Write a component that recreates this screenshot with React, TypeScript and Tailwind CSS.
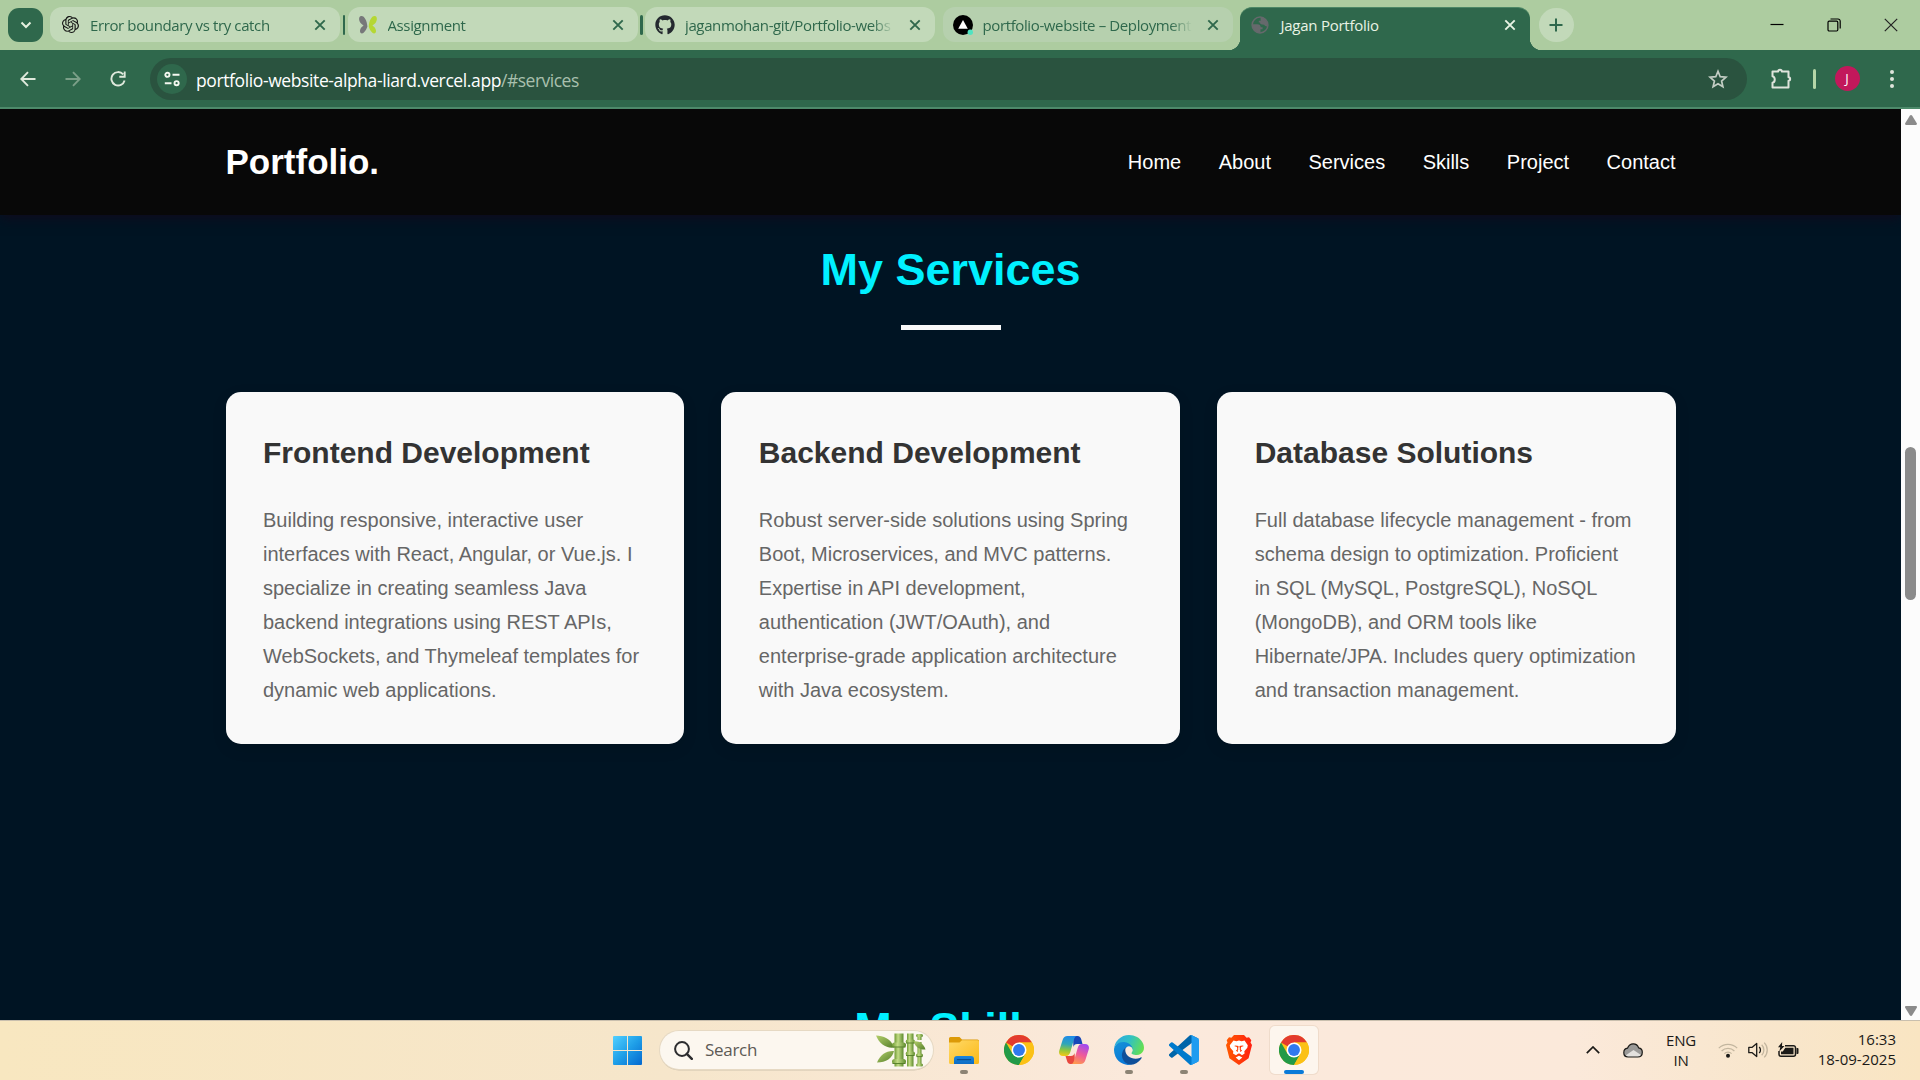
import React from "react";
import type { ReactNode } from "react";
import { SiOpenai } from "react-icons/si";
import { FaGithub } from "react-icons/fa";

/* ---------- favicons ---------- */

function ButterflyIcon() {
  return (
    <svg viewBox="0 0 20 20" className="h-5 w-5">
      <path d="M9.400 11.500C9 6 6.500.8 3.200 1.100.6 1.400.6 5.200 2.200 7.600c1 1.600 2.600 2.200 3.400 3-1.600 1-3.400 2.800-3.600 5.200-.2 2.600 2 3.600 3.600 2 2-2 3.200-4.200 3.800-6.300z" fill="#77787a" />
      <path d="M10.800 11.500C11 6 13.600.8 16.800 1.100c2.600.3 2.600 4.100 1 6.500-1 1.600-2.600 2.200-3.400 3 1.600 1 3.400 2.800 3.600 5.200.2 2.600-2 3.600-3.600 2-2-2-3.200-4.200-3.600-6.300z" fill="#b5d733" />
    </svg>
  );
}

function VercelIcon() {
  return (
    <svg viewBox="0 0 20 20" className="h-5 w-5">
      <circle cx="10" cy="10" r="10" fill="#000" />
      <path d="M10 5l4.800 8.800H5.200z" fill="#fff" />
      <circle cx="17.300" cy="17.300" r="2.700" fill="#50e3c2" />
    </svg>
  );
}

function GlobeIcon() {
  return (
    <svg viewBox="0 0 18 18" className="h-[18px] w-[18px]">
      <circle cx="9" cy="9" r="7.900" fill="none" stroke="#66696c" strokeWidth="1.500" />
      <path d="M9.500 1.300l3.500.9 2.300 2.200 1.200 3.400-.3 2.600c-1.500 0-2.500-.2-3-1.600l-2-.2c-1.400 0-2.200-.8-2.200-2H7.800V4.800h1.900z" fill="#66696c" />
      <path d="M1.300 8.200L6.500 8.300c2 .1 3.200 1.200 3.200 2.900h1.900v2.100H9.500v3.500c-3.600 0-6.900-2-8-5.500z" fill="#66696c" />
    </svg>
  );
}

function Cross({ className }: { className: string }) {
  return (
    <svg viewBox="0 0 12 12" className={"h-3 w-3 shrink-0 " + className} fill="none" stroke="currentColor" strokeWidth="1.900">
      <path d="M1.300 1.300l9.400 9.400M10.700 1.300L1.300 10.700" />
    </svg>
  );
}

/* ---------- browser ---------- */

function Tab({ icon, title, className }: { icon: ReactNode; title: string; className: string }) {
  return (
    <div className={"flex h-[35px] w-[290px] shrink-0 items-center rounded-xl pl-[10px] pr-[14px] " + className}>
      <span className="flex w-5 shrink-0 justify-center">{icon}</span>
      <span className="ml-[10px] w-[209px] overflow-hidden whitespace-nowrap text-[15px] leading-5 tracking-[-0.380px] text-[#2f684c] [mask-image:linear-gradient(to_right,black_187px,transparent_209px)]">
        {title}
      </span>
      <Cross className="ml-auto text-[#2f684c]" />
    </div>
  );
}

function TabDivider() {
  return <div className="mx-[2.500px] h-5 w-[2.500px] shrink-0 rounded-full bg-[#2f684c]" />;
}

function TabStrip() {
  return (
    <div className="flex h-[50px] bg-[#adcca0] pl-2">
      <div className="flex h-[49px] items-center">
        <button className="mr-[7px] mt-[1px] flex h-[34px] w-[35px] items-center justify-center rounded-[11px] bg-[#2f684c]">
          <svg viewBox="0 0 12 8" className="h-2 w-3" fill="none" stroke="#e5f0df" strokeWidth="2">
            <path d="M1.500 1.500L6 6l4.500-4.500" />
          </svg>
        </button>
        <Tab icon={<SiOpenai className="h-[17px] w-[17px] text-[#141414]" />} title="Error boundary vs try catch" className="bg-[#c2d9b9]" />
        <TabDivider />
        <Tab icon={<ButterflyIcon />} title="Assignment" className="bg-[#c2d9b9]" />
        <TabDivider />
        <Tab icon={<FaGithub className="h-5 w-5 text-[#24292f]" />} title="jaganmohan-git/Portfolio-webs" className="bg-[#c2d9b9]" />
        <div className="w-[7.500px] shrink-0" />
        <Tab icon={<VercelIcon />} title="portfolio-website – Deployment" className="bg-[#b6d0ae]" />
      </div>
      <div className="relative ml-[7px] mt-[7px] flex h-[43px] w-[290px] shrink-0 rounded-t-xl border-t border-[#4c8766] bg-[#2f684c] pl-[11px] pr-[14px]">
        <span className="absolute -left-3 bottom-0 h-3 w-3 bg-[radial-gradient(circle_at_0_0,transparent_12px,#2f684c_12.500px)]" />
        <span className="absolute -right-3 bottom-0 h-3 w-3 bg-[radial-gradient(circle_at_100%_0,transparent_12px,#2f684c_12.500px)]" />
        <div className="flex h-[34px] w-full items-center">
          <GlobeIcon />
          <span className="ml-3 text-[15px] leading-5 tracking-[-0.250px] text-[#e9f3e4]">Jagan Portfolio</span>
          <Cross className="ml-auto text-[#e9f3e4]" />
        </div>
      </div>
      <button className="ml-[9px] mt-2 flex h-[34px] w-[35px] items-center justify-center rounded-full bg-[#c2d9b9]">
        <svg viewBox="0 0 14 14" className="h-[14px] w-[14px]" stroke="#2f684c" strokeWidth="2">
          <path d="M7 .5v13M.5 7h13" />
        </svg>
      </button>
      <div className="ml-auto flex h-[49px] items-center gap-[43px] pr-[22px]">
        <svg viewBox="0 0 14 14" className="h-[14px] w-[14px]" stroke="#000" strokeWidth="1.200">
          <path d="M.5 6.500h13" />
        </svg>
        <svg viewBox="0 0 14 14" className="h-[14px] w-[14px]" fill="none" stroke="#000" strokeWidth="1.200">
          <rect x="1" y="3.200" width="9.800" height="9.800" rx="1.200" />
          <path d="M3.500 1H11a2.200 2.200 0 0 1 2.200 2.200v7.300" />
        </svg>
        <svg viewBox="0 0 14 14" className="h-[14px] w-[14px]" fill="none" stroke="#222" strokeWidth="1.200">
          <path d="M.8.8l12.400 12.400M13.200.8L.8 13.200" />
        </svg>
      </div>
    </div>
  );
}

function Toolbar() {
  return (
    <div className="flex h-[59px] items-center border-b-2 border-[#4d8a6a] bg-[#2f684c] pl-5 pr-[26px] text-[#dfe9dc]">
      <svg viewBox="0 0 16 16" className="h-4 w-4 shrink-0" fill="none" stroke="currentColor" strokeWidth="1.900">
        <path d="M15.500 8H1.500M8 1.200L1.300 8 8 14.800" />
      </svg>
      <svg viewBox="0 0 16 16" className="ml-[29px] h-4 w-4 shrink-0 text-[#7b9f88]" fill="none" stroke="currentColor" strokeWidth="1.900">
        <path d="M.5 8h14M8 1.200L14.700 8 8 14.800" />
      </svg>
      <svg viewBox="0 0 16 16" className="ml-[29px] h-4 w-4 shrink-0" fill="none" stroke="currentColor" strokeWidth="1.900">
        <path d="M13.200 3.400A6.700 6.700 0 1 0 14.600 9.500M14.700 .5v5.300H9.300" />
      </svg>
      <div className="ml-6 flex h-[42px] w-[1597px] shrink-0 items-center rounded-full bg-[#2a533f] pl-[7px] pr-[19px]">
        <span className="flex h-[30px] w-[30px] items-center justify-center rounded-full bg-[#2f684c]">
          <svg viewBox="0 0 16 16" className="h-4 w-4" fill="none" stroke="#f3f8f0" strokeWidth="1.900">
            <circle cx="3.400" cy="3.800" r="2.100" />
            <path d="M8.500 3.800h7M.8 12.200h6.700" />
            <circle cx="12.600" cy="12.200" r="2.100" />
          </svg>
        </span>
        <span className="ml-[9px] pt-[2px] text-[17.500px] leading-6 text-[#a9c0ae]">
          <span className="tracking-[-0.390px] text-white">portfolio-website-alpha-liard.vercel.app</span>
          <span className="tracking-[-0.500px]">/#services</span>
        </span>
        <svg viewBox="0 0 20 20" className="ml-auto h-5 w-5" fill="none" stroke="#c3cdc4" strokeWidth="1.700">
          <path d="M10 2.300l2.200 5.400 5.800.5-4.400 3.800 1.300 5.700L10 14.700l-4.900 3 1.300-5.700L2 8.200l5.800-.5z" />
        </svg>
      </div>
      <svg viewBox="0 0 24 24" className="ml-[22px] h-6 w-6 shrink-0" fill="none" stroke="#dfe4dc" strokeWidth="2" strokeLinejoin="round">
        <path d="M3.500 4.500h5.700c0-2.200 3.600-2.200 3.600 0h6.700v5.700c2.200 0 2.200 3.600 0 3.600v6.700h-16v-4.700c3-.6 3-6 0-6.600z" />
      </svg>
      <div className="ml-5 h-5 w-[2.500px] shrink-0 rounded-full bg-[#b5d6a8]" />
      <span className="ml-[19px] flex h-[25px] w-[25px] shrink-0 items-center justify-center rounded-full bg-[#c2185b] text-[13px] leading-none text-white">J</span>
      <svg viewBox="0 0 4 20" className="ml-auto h-5 w-1 shrink-0" fill="#dfe4dc">
        <circle cx="2" cy="3" r="2" />
        <circle cx="2" cy="10" r="2" />
        <circle cx="2" cy="17" r="2" />
      </svg>
    </div>
  );
}

/* ---------- portfolio page ---------- */

const links = ["Home", "About", "Services", "Skills", "Project", "Contact"];

const services = [
  {
    title: "Frontend Development",
    lines: [
      "Building responsive, interactive user",
      "interfaces with React, Angular, or Vue.js. I",
      "specialize in creating seamless Java",
      "backend integrations using REST APIs,",
      "WebSockets, and Thymeleaf templates for",
      "dynamic web applications.",
    ],
  },
  {
    title: "Backend Development",
    lines: [
      "Robust server-side solutions using Spring",
      "Boot, Microservices, and MVC patterns.",
      "Expertise in API development,",
      "authentication (JWT/OAuth), and",
      "enterprise-grade application architecture",
      "with Java ecosystem.",
    ],
  },
  {
    title: "Database Solutions",
    lines: [
      "Full database lifecycle management - from",
      "schema design to optimization. Proficient",
      "in SQL (MySQL, PostgreSQL), NoSQL",
      "(MongoDB), and ORM tools like",
      "Hibernate/JPA. Includes query optimization",
      "and transaction management.",
    ],
  },
];

function Page() {
  return (
    <main className="flex h-full flex-1 flex-col overflow-hidden bg-[#001423] font-['Liberation_Sans',Arial,sans-serif]">
      <header className="z-10 h-[106px] shrink-0 bg-[#080808] shadow-[0_3px_12px_rgba(20,8,26,0.8)]">
        <div className="mx-auto flex h-full w-[1450px] items-center justify-between">
          <span className="-mt-[2px] text-[35px] font-bold leading-none text-white">Portfolio.</span>
          <nav className="flex gap-[37.500px] text-[20px] leading-none text-white">
            {links.map((link) => (
              <a key={link}>{link}</a>
            ))}
          </nav>
        </div>
      </header>
      <section className="mx-auto flex w-[1450px] shrink-0 flex-col items-center pt-[19px]">
        <h2 className="h-[72px] text-[45px] font-bold leading-[72px] text-[#00f0ff]">My Services</h2>
        <div className="mt-[19px] h-[5px] w-[100px] bg-[#f9f9f9]" />
        <div className="mt-[62px] grid w-full grid-cols-3 gap-[37.500px]">
          {services.map((service) => (
            <article key={service.title} className="h-[352px] rounded-[15px] bg-[#f9f9f9] px-[37.500px] pt-[36.500px] shadow-[0_5px_15px_rgba(0,0,0,0.1)]">
              <h3 className="text-[30px] font-bold leading-[48px] text-[#333]">{service.title}</h3>
              <p className="mt-[26px] whitespace-nowrap text-[20px] leading-[34px] text-[#666]">
                {service.lines.map((line) => (
                  <span key={line} className="block">{line}</span>
                ))}
              </p>
            </article>
          ))}
        </div>
      </section>
      <section className="mt-[249px] shrink-0 text-center">
        <h2 className="text-[45px] font-bold leading-[72px] text-[#00f0ff]">My Skills</h2>
      </section>
    </main>
  );
}

function Scrollbar() {
  return (
    <div className="flex w-[19px] shrink-0 flex-col items-center bg-[#fcfcfc] pb-1 pt-[6px]">
      <svg viewBox="0 0 12 10" className="h-[10px] w-3" fill="#8b8b8b">
        <path d="M6 0c.5 0 .9.300 1.200.7L11.800 8.200c.4.8 0 1.800-.9 1.800H1.100C.2 10-.2 9 .2 8.200L4.800.7C5.100.3 5.500 0 6 0z" />
      </svg>
      <div className="mt-[322px] h-[153px] w-[11px] rounded-full bg-[#8b8b8b]" />
      <svg viewBox="0 0 12 10" className="mt-auto h-[10px] w-3" fill="#8b8b8b">
        <path d="M6 10c.5 0 .9-.3 1.200-.7L11.800 1.800c.4-.8 0-1.800-.9-1.800H1.100C.2 0-.2 1 .2 1.800L4.800 9.300c.3.4.7.7 1.200.7z" />
      </svg>
    </div>
  );
}

/* ---------- taskbar ---------- */

function WindowsLogo() {
  return (
    <svg viewBox="0 0 29 29" className="h-[29px] w-[29px]">
      <defs>
        <linearGradient id="win" x1="0" y1="0" x2="29" y2="29" gradientUnits="userSpaceOnUse">
          <stop offset="0" stopColor="#52d0ff" />
          <stop offset="0.500" stopColor="#1f9fe8" />
          <stop offset="1" stopColor="#0468cf" />
        </linearGradient>
      </defs>
      <path d="M1 0h13v14H0V1a1 1 0 0 1 1-1zM15 0h13a1 1 0 0 1 1 1v13H15zM0 15h14v14H1a1 1 0 0 1-1-1zM15 15h14v13a1 1 0 0 1-1 1H15z" fill="url(#win)" />
    </svg>
  );
}

function Bamboo() {
  return (
    <svg viewBox="0 0 50 34" className="h-[34px] w-[50px]">
      <defs>
        <linearGradient id="stalk" x1="0" x2="1">
          <stop offset="0" stopColor="#6f9a33" />
          <stop offset="0.400" stopColor="#c3dc86" />
          <stop offset="1" stopColor="#5d8a2c" />
        </linearGradient>
        <linearGradient id="leaf" x1="0" y1="0" x2="1" y2="1">
          <stop offset="0" stopColor="#b4cf6b" />
          <stop offset="1" stopColor="#557f2a" />
        </linearGradient>
      </defs>
      <path d="M0 2.500c7 .2 15 3 18 12C10 15.500 3.500 11 0 2.500z" fill="url(#leaf)" />
      <path d="M1 29.500C4 22 10 17.500 18 18c-1.500 7-8 11.500-17 11.500z" fill="url(#leaf)" />
      <g fill="url(#stalk)">
        <path d="M18.500.5h9V10h-9zM18.500 13h9v13.500h-9zM18.500 30h9v3.500h-9z" />
        <path d="M31 .5h6.500V7H31zM31 10h6.500v9H31zM31 22.500h6.500v11H31z" />
        <path d="M41.500 2h4v5h-4zM41.500 9h4v12h-4zM41.500 24h4v9h-4z" />
        <rect x="16" y="9.500" width="14" height="5" rx="2.500" />
        <rect x="16" y="26" width="14" height="5" rx="2.500" />
        <rect x="29.700" y="6.500" width="9.300" height="4" rx="2" />
        <rect x="29.700" y="18.500" width="9.300" height="4.500" rx="2" />
        <rect x="40" y="1" width="7" height="3" rx="1.500" />
        <rect x="40" y="20.500" width="7" height="3.500" rx="1.700" />
        <rect x="40" y="30.500" width="7" height="3" rx="1.500" />
      </g>
      <path d="M37.500 8.500c5-1 10 2 12 8-6 .5-10-2.500-12-8z" fill="url(#leaf)" />
      <path d="M16.500 14h13M16.500 30.500h13M30 10h8.500M30 22.500h8.500M40.500 23.600h6" stroke="#507a26" strokeWidth="0.900" />
    </svg>
  );
}

function ExplorerIcon() {
  return (
    <svg viewBox="0 0 30 27" className="h-[27px] w-[30px]">
      <defs>
        <linearGradient id="folder" x1="0" y1="0" x2="1" y2="1">
          <stop offset="0" stopColor="#ffd968" />
          <stop offset="1" stopColor="#fbb916" />
        </linearGradient>
        <linearGradient id="pocket" x1="0" y1="0" x2="0" y2="1">
          <stop offset="0" stopColor="#1b86dd" />
          <stop offset="1" stopColor="#0d6cc4" />
        </linearGradient>
      </defs>
      <path d="M0 1.500A1.500 1.500 0 0 1 1.500 0h9l2.500 2.500h15.500A1.500 1.500 0 0 1 30 4v3H0z" fill="#dc9a08" />
      <path d="M0 5.500h10.500L13 3.300h15.500A1.500 1.500 0 0 1 30 4.800v20.700a1.500 1.500 0 0 1-1.500 1.500h-27A1.500 1.500 0 0 1 0 25.500z" fill="url(#folder)" />
      <path d="M5 27v-5a3 3 0 0 1 3-3h14a3 3 0 0 1 3 3v5z" fill="url(#pocket)" />
      <path d="M8.500 22.700h13" stroke="#0a4f91" strokeWidth="1.300" strokeLinecap="round" />
    </svg>
  );
}

function ChromeIcon() {
  return (
    <svg viewBox="0 0 48 48" className="h-[30px] w-[30px]">
      <circle cx="24" cy="24" r="24" fill="#fbc116" />
      <path d="M24 24L3.200 12A24 24 0 0 1 44.800 12H24z" fill="#e33b2e" />
      <path d="M3.200 12A24 24 0 0 0 24 48l10.400-18L24 24l-10.400 6z" fill="#229a48" />
      <path d="M44.800 12H24v12l10.400 6L24 48A24 24 0 0 0 44.800 12z" fill="#fbc116" />
      <circle cx="24" cy="24" r="12" fill="#fff" />
      <circle cx="24" cy="24" r="9.500" fill="#3079ee" />
    </svg>
  );
}

function CopilotIcon() {
  return (
    <svg viewBox="0 0 30 28" className="h-7 w-[30px]">
      <defs>
        <linearGradient id="copA" x1="0.400" y1="0" x2="0.300" y2="1">
          <stop offset="0" stopColor="#1f8be8" />
          <stop offset="0.400" stopColor="#2fa6b8" />
          <stop offset="0.700" stopColor="#8cc63f" />
          <stop offset="1" stopColor="#f5c916" />
        </linearGradient>
        <linearGradient id="copB" x1="0.700" y1="0" x2="0.300" y2="1">
          <stop offset="0" stopColor="#a14af0" />
          <stop offset="0.500" stopColor="#ee5a9b" />
          <stop offset="1" stopColor="#ff9a4d" />
        </linearGradient>
      </defs>
      <path d="M14 0h4.500c2.200 0 3.200 1.400 3.800 3.500L23.500 8H18c-2 0-3 1.200-3.600 3z" fill="#1647b8" />
      <path d="M16 28h-4.500c-2.200 0-3-1.400-3.600-3.500L6.500 20H12c2 0 3-1.200 3.600-3z" fill="#e8483f" />
      <path d="M8.500 0H18c-1.500 0-2.400 1.300-3 3.300l-3.600 12.500C10.600 18.500 9.500 20 7 20H4c-3.300 0-4.600-2.400-3.700-5.600L3.600 4C4.400 1.400 6 0 8.500 0z" fill="url(#copA)" />
      <path d="M21.500 28H12c1.500 0 2.400-1.300 3-3.300l3.600-12.500C19.400 9.500 20.500 8 23 8h3c3.300 0 4.600 2.400 3.700 5.600L26.400 24c-.8 2.600-2.400 4-4.900 4z" fill="url(#copB)" />
    </svg>
  );
}

function EdgeIcon() {
  return (
    <svg viewBox="0 0 256 256" className="h-[30px] w-[30px]">
      <defs>
        <linearGradient id="edgeTop" x1="0" y1="0.300" x2="1" y2="0.600">
          <stop offset="0" stopColor="#2fa9e0" />
          <stop offset="0.450" stopColor="#30c0c6" />
          <stop offset="1" stopColor="#66e04f" />
        </linearGradient>
        <linearGradient id="edgeMid" x1="0" y1="0" x2="0.500" y2="1">
          <stop offset="0" stopColor="#1594d8" />
          <stop offset="1" stopColor="#0a76d6" />
        </linearGradient>
      </defs>
      <path d="M231 190.500c-3.400 1.800-6.900 3.400-10.500 4.700a101.800 101.800 0 0 1-35.900 6.400c-47.300 0-88.500-32.500-88.500-74.300.1-11.400 6.400-21.900 16.400-27.300-42.800 1.800-53.800 46.400-53.800 72.500 0 73.900 68.100 81.400 82.800 81.400 7.900 0 19.800-2.300 27-4.600l1.300-.4a128.300 128.300 0 0 0 66.600-52.800 4 4 0 0 0-5.400-5.600z" fill="#0f4f99" />
      <path d="M105.700 241.400a79.200 79.200 0 0 1-22.700-21.300 80.700 80.700 0 0 1 29.500-120c3.200-1.500 8.500-4.100 15.600-4a32.400 32.400 0 0 1 25.700 13 31.900 31.900 0 0 1 6.300 18.700c0-.2 24.500-79.600-80-79.600-43.900 0-80 41.600-80 78.200a130.200 130.200 0 0 0 12.100 56 128 128 0 0 0 156.400 67 75.500 75.500 0 0 1-62.800-8z" fill="url(#edgeMid)" />
      <path d="M152.300 148.900c-.9 1-3.400 2.500-3.400 5.600 0 2.600 1.700 5.200 4.800 7.300 14.300 10 41.400 8.600 41.500 8.600a59.600 59.600 0 0 0 30.300-8.300 61.400 61.400 0 0 0 30.400-52.900c.3-22.400-8-37.300-11.300-43.900C223.500 23.900 177.700 0 128 0A128 128 0 0 0 0 126.200c.5-36.500 36.800-66 80-66 3.500 0 23.500.3 42 10.100 16.300 8.600 24.900 19 30.800 29.200 6.200 10.700 7.300 24.100 7.300 29.500 0 5.300-2.700 13.300-7.800 19.900z" fill="url(#edgeTop)" />
    </svg>
  );
}

function VsCodeIcon() {
  return (
    <svg viewBox="0 0 100 100" className="h-[30px] w-[30px]">
      <path d="M96.460 10.800L75.860.88a6.230 6.230 0 0 0-7.110 1.200L1.300 63.580a4.170 4.170 0 0 0 0 6.170l5.510 5a4.170 4.170 0 0 0 5.320.24L93.360 13.370A4.130 4.130 0 0 1 100 16.670v-.24a6.250 6.250 0 0 0-3.540-5.630z" fill="#0065a9" />
      <path d="M96.460 89.200l-20.600 9.920a6.230 6.230 0 0 1-7.110-1.200L1.300 36.420a4.170 4.170 0 0 1 0-6.170l5.510-5a4.170 4.170 0 0 1 5.320-.24l81.230 61.620A4.130 4.130 0 0 0 100 83.330v.24a6.250 6.250 0 0 1-3.540 5.630z" fill="#007acc" />
      <path d="M75.860 99.130a6.230 6.230 0 0 1-7.110-1.210C71.060 100.220 75 98.590 75 95.330V4.670C75 1.410 71.060-.22 68.750 2.080A6.230 6.230 0 0 1 75.860.87l20.600 9.910A6.250 6.250 0 0 1 100 16.410v67.180a6.250 6.250 0 0 1-3.540 5.630z" fill="#1f9cf0" />
    </svg>
  );
}

function BraveIcon() {
  return (
    <svg viewBox="0 0 26 30" className="h-[30px] w-[26px]">
      <defs>
        <linearGradient id="brave" x1="0" x2="1">
          <stop offset="0" stopColor="#ff5a00" />
          <stop offset="1" stopColor="#ff1f10" />
        </linearGradient>
      </defs>
      <path d="M8 0h10l2.600 2.700 2.400-.4 2.300 3-.8 2.200L26 10l-3.400 13.200L13 30l-9.600-6.800L0 10l1.500-2.500-.8-2.200 2.300-3 2.400.4z" fill="url(#brave)" />
      <path d="M7.500 5.600l2.800.6 2.700-.7 2.700.7 2.800-.6 3.300 4.600-.5 2.600-3 3.400.3 2.300-2.600 1.700-2.300-1.700v-1.300l2.400-1.500-1.400-1.500.4-2.200 2.800-.9-1.500-.5-3 .3.500 3.400-.9 2.200-.9-2.200.5-3.400-3-.3-1.500.5 2.800.9.4 2.200-1.400 1.500 2.400 1.500v1.300l-2.300 1.700L7 18.500l.3-2.300-3-3.400-.5-2.600z" fill="#fff" />
      <path d="M13 20.800l3.300 1.800L13 25.200l-3.300-2.600zM11.800 15h2.400l-.2 3.500h-2z" fill="#fff" />
    </svg>
  );
}

type App = { name: string; icon: ReactNode; state: "idle" | "open" | "active" };

const apps: App[] = [
  { name: "explorer", icon: <ExplorerIcon />, state: "open" },
  { name: "chrome", icon: <ChromeIcon />, state: "idle" },
  { name: "copilot", icon: <CopilotIcon />, state: "idle" },
  { name: "edge", icon: <EdgeIcon />, state: "open" },
  { name: "vscode", icon: <VsCodeIcon />, state: "open" },
  { name: "brave", icon: <BraveIcon />, state: "idle" },
  { name: "chrome-active", icon: <ChromeIcon />, state: "active" },
];

function TaskbarApp({ app }: { app: App }) {
  const active = app.state === "active";
  return (
    <div className={"relative flex h-12 w-12 items-center justify-center rounded-[5px] " + (active ? "bg-[#fdf6ee] shadow-[0_0_0_1px_rgba(225,205,185,0.45)]" : "")}>
      {app.icon}
      {app.state === "open" && <span className="absolute bottom-0 left-5 h-1 w-2 rounded-full bg-[#8c8374]" />}
      {active && <span className="absolute bottom-0 left-[14px] h-1 w-5 rounded-full bg-[#0a7ad8]" />}
    </div>
  );
}

function Taskbar() {
  return (
    <footer className="flex h-[60px] shrink-0 items-center border-t border-[#c9bfae] bg-[linear-gradient(to_right,#f8e7c0_0%,#f6e6cb_35%,#fbe9dc_60%,#fbe9da_82%,#f8e6cc_92%,#f9e5c2_100%)] pb-[1px] pl-[613px] pr-6 text-[#1b1a17]">
      <WindowsLogo />
      <div className="ml-[18px] flex h-[38px] w-[273px] items-center rounded-full bg-[#fcf7ef] pl-[14px] pr-[7px] shadow-[0_0_0_1px_#e6d9c3,0_1.500px_0_0_#cfc3ae]">
        <svg viewBox="0 0 19 19" className="h-[19px] w-[19px]" fill="none" stroke="#2c2c2e">
          <circle cx="8" cy="8" r="6.900" strokeWidth="2" />
          <path d="M12.800 12.800l5 5" strokeWidth="2.500" strokeLinecap="round" />
        </svg>
        <span className="ml-3 text-[17px] leading-6 tracking-[-0.300px] text-[#5d5a55]">Search</span>
        <span className="ml-auto"><Bamboo /></span>
      </div>
      <div className="ml-[7px] flex gap-[7px]">
        {apps.map((app) => (
          <TaskbarApp key={app.name} app={app} />
        ))}
      </div>
      <svg viewBox="0 0 14 8" className="ml-auto h-2 w-[14px]" fill="none" stroke="#1b1a17" strokeWidth="1.700">
        <path d="M.8 7.200L7 1l6.200 6.200" />
      </svg>
      <svg viewBox="0 0 20 15" className="ml-[23px] h-[15px] w-5">
        <path d="M4.500 5.200C5.500 2.500 7.600.8 10.200.8c3 0 4.700 1.700 5.400 4 2.200.3 3.700 2.200 3.700 4.400 0 2.900-2 4.800-4.600 4.800H5c-2.500 0-4.200-1.900-4.200-4.300 0-2.300 1.600-4.200 3.700-4.500z" fill="#9b9a98" />
        <path d="M2.500 12.500L10.500 7l7.500 5c-1 1.300-2 2-3.300 2H5c-1 0-1.900-.6-2.500-1.500z" fill="#e3e1de" />
        <path d="M4.500 5.200C5.500 2.500 7.600.8 10.200.8c3 0 4.700 1.700 5.400 4 2.200.3 3.700 2.200 3.700 4.400 0 2.900-2 4.800-4.600 4.800H5c-2.500 0-4.200-1.900-4.200-4.300 0-2.300 1.600-4.200 3.700-4.500z" fill="none" stroke="#1b1a17" strokeWidth="1.200" />
      </svg>
      <div className="ml-[22px] w-8 text-center text-[15px] leading-5 tracking-[-0.200px]">
        <div>ENG</div>
        <div>IN</div>
      </div>
      <svg viewBox="0 0 20 16" className="ml-[21px] h-4 w-5" fill="none" stroke="#c3b69f" strokeWidth="1.200">
        <path d="M.8 6.200a13 13 0 0 1 18.400 0M3.600 9a9 9 0 0 1 12.800 0M6.400 11.700a5.100 5.100 0 0 1 7.200 0" />
        <circle cx="10" cy="13.700" r="2" fill="#1b1a17" stroke="none" />
      </svg>
      <svg viewBox="0 0 20 16" className="ml-[10px] h-4 w-5" fill="none" stroke="#1b1a17" strokeWidth="1.300">
        <path d="M.8 5.300h3.400L8.700 1.500v13l-4.500-3.800H.8z" strokeLinejoin="round" />
        <path d="M11.200 5a4.200 4.200 0 0 1 0 6" />
        <path d="M13.700 2.800a7.300 7.300 0 0 1 0 10.400M16.200.6a10.500 10.500 0 0 1 0 14.800" stroke="#c3b69f" />
      </svg>
      <svg viewBox="0 0 21 16" className="ml-[10px] h-4 w-[21px]">
        <path d="M7 3.700h8.500a2 2 0 0 1 2 2v6.600a2 2 0 0 1-2 2H3a2 2 0 0 1-2-2V9" fill="none" stroke="#1b1a17" strokeWidth="1.500" />
        <path d="M7.300 5.700h8.200v6.600H3V9.500h1.800z" fill="#1b1a17" />
        <path d="M18.500 6h1a1 1 0 0 1 1 1v4a1 1 0 0 1-1 1h-1z" fill="#1b1a17" />
        <path d="M4.200 0L0 5.200h2.300L1.300 9.500 6.500 3.900H4z" fill="#1b1a17" />
      </svg>
      <div className="-mt-[2px] ml-[17px] w-[80px] text-right text-[15px] leading-5">
        <div>16:33</div>
        <div>18-09-2025</div>
      </div>
    </footer>
  );
}

export default function App() {
  return (
    <div className="flex h-[1080px] w-[1920px] flex-col overflow-hidden font-['Open_Sans','Noto_Sans',sans-serif]">
      <TabStrip />
      <Toolbar />
      <div className="flex h-[911px] shrink-0">
        <Page />
        <Scrollbar />
      </div>
      <Taskbar />
    </div>
  );
}
